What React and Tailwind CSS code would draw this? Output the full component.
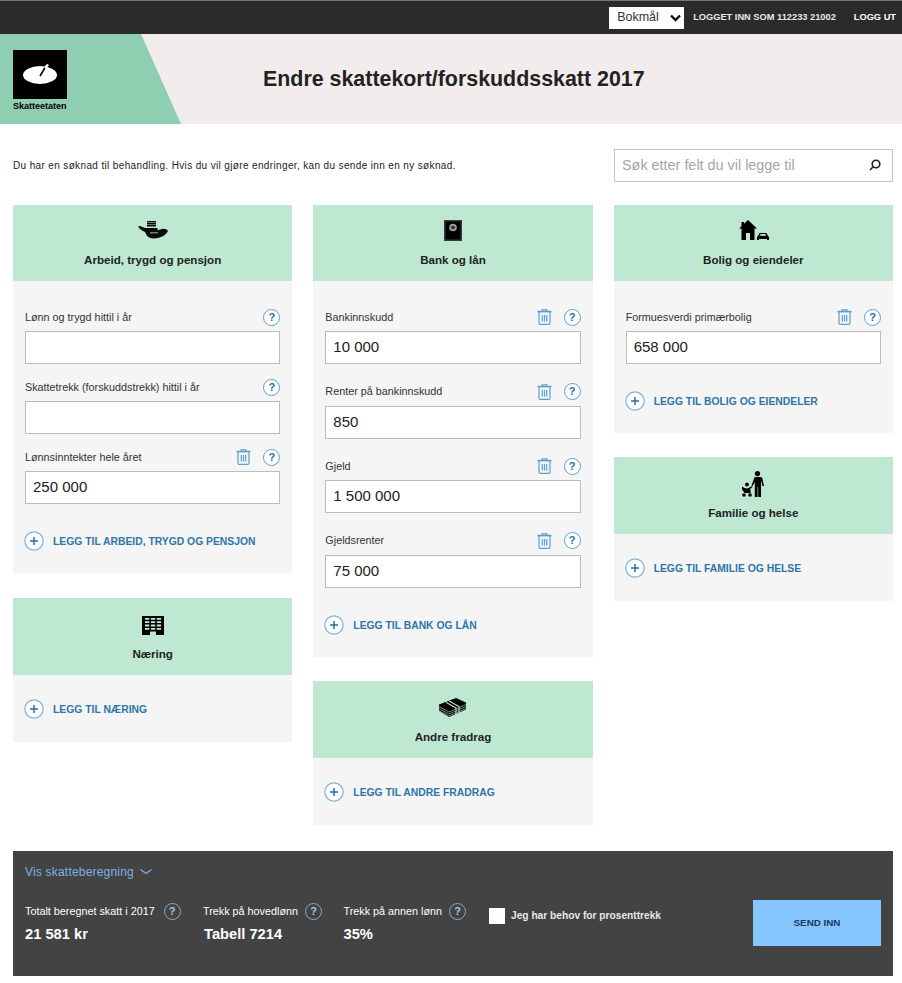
import React from "react";

const Help = ({ dark }) => (
  <span className={`flex h-[17px] w-[17px] shrink-0 items-center justify-center rounded-full border text-[11px] font-bold leading-none ${dark ? "border-[#8aa9c4] text-[#a9c6df]" : "border-[#5b9fcf] bg-white text-[#2a6f9e]"}`}>
    ?
  </span>
);

const Trash = () => (
  <svg width="15" height="16" viewBox="0 0 15 16" fill="none" stroke="#5b9fcf" strokeWidth="1.2">
    <path d="M0.5 2.6h14" strokeWidth="1.6" />
    <path d="M5 2.2V.8h5v1.4" />
    <path d="M2 3v11.2c0 .7.4 1.1 1.1 1.1h8.8c.7 0 1.1-.4 1.1-1.1V3" />
    <path d="M5.3 6v6.5M7.5 6v6.5M9.7 6v6.5" />
  </svg>
);

const PlusCircle = () => (
  <svg width="20" height="20" viewBox="0 0 20 20" fill="none" className="shrink-0">
    <circle cx="10" cy="10" r="9.2" fill="#fff" stroke="#7db5dc" strokeWidth="1.2" />
    <path d="M6 10h8M10 6v8" stroke="#2a6f9e" strokeWidth="1.5" />
  </svg>
);

const HandIcon = () => (
  <svg width="30" height="18" viewBox="0 0 30 18" fill="#0a0a0a">
    <path d="M9 0h9v1.400H9zM9 2h9v1.400H9zM9 4h9v1.400H9z" />
    <path d="M0 5.500L2 5l5 2h11c2 0 2.500 2 1 2.500L24 8c3-.5 5 .5 6 2-2 4-6 6-10 7-4 1-8 .5-11-2l-2-4C4 10 1.500 8 0 5.500z" />
    <path d="M12 11.800h8" stroke="#bfe8d3" strokeWidth="0.8" />
  </svg>
);

const SafeIcon = () => (
  <svg width="18" height="21" viewBox="0 0 18 21">
    <rect x="0" y="0" width="18" height="21" fill="#3a3a3a" />
    <rect x="1.500" y="1.500" width="15" height="18" fill="#000" />
    <circle cx="9" cy="7.500" r="3.800" fill="#9a9a9a" />
    <circle cx="9" cy="7.500" r="1.800" fill="#2a2a2a" />
  </svg>
);

const HouseIcon = () => (
  <svg width="31" height="20" viewBox="0 0 31 20" fill="#000">
    <path d="M10 0l9 8.500h-2.500V20H12v-7H8v7H3.500V8.500H1l2.500-2.300V2H6v1.700z" />
    <path d="M20 16l1.500-3h7l1.500 3c.7.200 1 .6 1 1.200V20h-2v-1h-8v1h-2v-2.800c0-.6.300-1 1-1.200z" />
    <path d="M21.800 15.800l.8-1.700h4.800l.8 1.700z" fill="#bfe8d3" />
  </svg>
);

const FamilyIcon = () => (
  <svg width="22" height="26" viewBox="0 0 22 26" fill="#000">
    <circle cx="15.500" cy="2.600" r="2.600" />
    <path d="M12.500 6h6c1 0 1.700.7 1.900 1.500L22 15h-1.600l-1.400-6v17h-2.800V16h-.6v10h-2.800V11l-2.100 4-1.200-.8 2.800-7.200c.1-.6.400-1 .7-1z" />
    <circle cx="5" cy="13.500" r="1.900" />
    <path d="M0 15.500c2.500 2 5.500 2.500 6.500 1.500l3.500-2 .7.800L8.200 18l.6 4H2.500L0 18.500z" />
    <circle cx="2" cy="24" r="1.800" />
    <circle cx="8" cy="24" r="1.800" />
  </svg>
);

const BuildingIcon = () => (
  <svg width="22" height="19" viewBox="0 0 22 19">
    <path d="M0 0h22v19h-8v-3.500H8V19H0z" fill="#000" />
    <path d="M3 2h4.300v1.800H3zM8.900 2h4.300v1.800H8.900zM14.800 2h4.300v1.800h-4.300zM3 5.300h4.300v1.800H3zM8.900 5.300h4.300v1.800H8.900zM14.800 5.300h4.300v1.800h-4.300zM3 8.600h4.300v1.800H3zM8.900 8.600h4.300v1.800H8.900zM14.800 8.600h4.300v1.800h-4.300zM3 11.900h4.300v1.800H3zM8.900 11.900h4.300v1.800H8.900zM14.800 11.900h4.300v1.800h-4.300z" fill="#bfe8d3" />
  </svg>
);

const MoneyIcon = () => (
  <svg width="27" height="19" viewBox="0 0 27 19" fill="none">
    <path d="M0 6.500L17 0l10 4.500v7L10 19 0 13z" fill="#000" />
    <path d="M0 8.500l10 5.500 17-7.500M0 10.500l10 5.500 17-7.500M0 12.500l10 5.500 17-7.500" stroke="#bfe8d3" strokeWidth="0.6" />
    <path d="M7 4.300l10 5.700v8" stroke="#bfe8d3" strokeWidth="1.100" />
    <path d="M10 3l10 5.500v8" stroke="#bfe8d3" strokeWidth="1.100" />
  </svg>
);

const Field = ({ label, value, trash, gap }) => (
  <div className={gap}>
    <div className="flex h-[18px] items-center justify-between">
      <span className="text-[10.8px] text-[#333]">{label}</span>
      <span className="flex items-center gap-[12px]">
        {trash && <Trash />}
        <Help />
      </span>
    </div>
    <div className="mt-[5px] flex h-[33px] items-center border border-[#bcbcbc] bg-white pl-[7px] text-[15px] text-[#222]">
      {value}
    </div>
  </div>
);

const Card = ({ icon, title, add, fields, fieldGap = "mb-[22px]", iconTop = "pt-[14px]", head = "h-[77px]", titleGap = "mt-[8px]" }) => (
  <section>
    <div className={`flex flex-col items-center bg-[#bfe8d3] ${head} ${iconTop}`}>
      <div className="flex h-[26px] items-center">{icon}</div>
      <h2 className={`text-[11.6px] font-bold leading-4 text-[#222] ${titleGap}`}>{title}</h2>
    </div>
    <div className={`bg-[#f5f5f5] px-3 ${fields ? "pt-[27px] pb-[22px]" : "pt-[24px] pb-[23px]"}`}>
      {fields &&
        fields.map((f, i) => (
          <Field key={f.label} {...f} gap={i === fields.length - 1 ? "mb-[27px]" : fieldGap} />
        ))}
      <a className="-ml-px flex h-5 items-center gap-[9px] text-[10.35px] font-bold text-[#2f75a8]">
        <PlusCircle />
        <span className="pt-[2px]">{add}</span>
      </a>
    </div>
  </section>
);

export default function App() {
  return (
    <div className="h-[983px] w-[902px] bg-white font-['Liberation_Sans',Arial,sans-serif] text-[#222]">
      <div className="flex h-[34px] items-center justify-end gap-[9px] border-t border-t-[#777] bg-[#2b2b2b] pr-[6px] text-[9.27px] font-bold text-white">
        <div className="flex h-[22px] w-[75px] items-center justify-between bg-white pl-[8px] pr-[3px] text-[12.5px] font-normal text-[#333]">
          Bokmål
          <svg width="11" height="8" viewBox="0 0 11 8" fill="none" stroke="#111" strokeWidth="2.400"><path d="M1 1.500l4.500 4.500L10 1.500" /></svg>
        </div>
        <span className="text-[#e8e8e8]">LOGGET INN SOM 112233 21002</span>
        <span className="ml-[9px]">LOGG UT</span>
      </div>

      <header className="relative flex h-[90px] items-center bg-[#f2ecec]">
        <div className="absolute inset-y-0 left-0 w-[181px] bg-[#8fceb0] [clip-path:polygon(0_0,141px_0,100%_100%,0_100%)]" />
        <div className="relative ml-[13px] mt-[2px] flex w-[54px] flex-col">
          <div className="flex h-[49px] items-center justify-center bg-black">
            <svg width="34" height="20" viewBox="0 0 34 20">
              <ellipse cx="17" cy="11" rx="17" ry="9" fill="#fff" />
              <path d="M17 12l6-10" stroke="#000" strokeWidth="1.600" />
              <path d="M21 3l3-3 2 1-3 4z" fill="#fff" />
            </svg>
          </div>
          <span className="mt-[2px] text-[9px] font-bold leading-[10px] text-black">Skatteetaten</span>
        </div>
        <h1 className="relative ml-[196px] text-[21.4px] font-bold text-[#222]">Endre skattekort/forskuddsskatt 2017</h1>
      </header>

      <div className="flex h-[81px] items-center justify-between pl-[13px] pr-[9px]">
        <p className="mt-[1px] text-[10px] tracking-[0.36px] text-[#222]">Du har en søknad til behandling. Hvis du vil gjøre endringer, kan du sende inn en ny søknad.</p>
        <div className="mt-[1px] flex h-[33px] w-[279px] items-center justify-between border border-[#c4c4c4] pl-[7px] pr-[11px] text-[14.4px] text-[#a5a5a5]">
          <span className="pt-[2px]">Søk etter felt du vil legge til</span>
          <svg width="12" height="12" viewBox="0 0 12 12" fill="none" stroke="#222" strokeWidth="1.600">
            <circle cx="7" cy="5" r="3.800" />
            <path d="M4.200 7.800L1 11" />
          </svg>
        </div>
      </div>

      <main className="grid h-[646px] grid-cols-3 items-start gap-x-[21px] pl-[13px] pr-[9px]">
        <div className="flex flex-col gap-[25px]">
          <Card
            icon={<HandIcon />}
            iconTop="pt-[12px]"
            head="h-[76px]"
            titleGap="mt-[9px]"
            title="Arbeid, trygd og pensjon"
            add="LEGG TIL ARBEID, TRYGD OG PENSJON"
            fieldGap="mb-[14px]"
            fields={[
              { label: "Lønn og trygd hittil i år", value: "" },
              { label: "Skattetrekk (forskuddstrekk) hittil i år", value: "" },
              { label: "Lønnsinntekter hele året", value: "250 000", trash: true },
            ]}
          />
          <Card icon={<BuildingIcon />} title="Næring" add="LEGG TIL NÆRING" />
        </div>
        <div className="flex flex-col gap-[24px]">
          <Card
            icon={<SafeIcon />}
            iconTop="pt-[12px]"
            head="h-[76px]"
            titleGap="mt-[9px]"
            title="Bank og lån"
            add="LEGG TIL BANK OG LÅN"
            fieldGap="mb-[18.5px]"
            fields={[
              { label: "Bankinnskudd", value: "10 000", trash: true },
              { label: "Renter på bankinnskudd", value: "850", trash: true },
              { label: "Gjeld", value: "1 500 000", trash: true },
              { label: "Gjeldsrenter", value: "75 000", trash: true },
            ]}
          />
          <Card icon={<MoneyIcon />} title="Andre fradrag" add="LEGG TIL ANDRE FRADRAG" />
        </div>
        <div className="flex flex-col gap-[24px]">
          <Card
            icon={<HouseIcon />}
            iconTop="pt-[12px]"
            head="h-[76px]"
            titleGap="mt-[9px]"
            title="Bolig og eiendeler"
            add="LEGG TIL BOLIG OG EIENDELER"
            fields={[{ label: "Formuesverdi primærbolig", value: "658 000", trash: true }]}
          />
          <Card icon={<FamilyIcon />} title="Familie og helse" add="LEGG TIL FAMILIE OG HELSE" />
        </div>
      </main>

      <footer className="ml-[13px] mr-[9px] h-[125px] bg-[#434343] px-3 pt-[12px] text-white">
        <div className="flex items-center gap-[6px] text-[12px] tracking-[0.2px] text-[#7fb2e0]">
          Vis skatteberegning
          <svg width="12" height="6" viewBox="0 0 12 6" fill="none" stroke="#7fb2e0" strokeWidth="1.100"><path d="M.5.5L6 4.500 11.500.5" /></svg>
        </div>
        <div className="mt-[22px] flex items-start">
          <div className="w-[178px]">
            <div className="flex h-[17px] items-center gap-[9px] text-[10.8px]">Totalt beregnet skatt i 2017 <Help dark /></div>
            <div className="mt-[3px] text-[14.7px] font-bold">21 581 kr</div>
          </div>
          <div className="w-[140.5px]">
            <div className="flex h-[17px] items-center gap-[7px] text-[10.8px]">Trekk på hovedlønn <Help dark /></div>
            <div className="mt-[3px] pl-px text-[14.7px] font-bold">Tabell 7214</div>
          </div>
          <div className="w-[145.5px]">
            <div className="flex h-[17px] items-center gap-[7px] text-[10.8px]">Trekk på annen lønn <Help dark /></div>
            <div className="mt-[3px] text-[14.7px] font-bold">35%</div>
          </div>
          <div className="mt-[4px] flex h-[17px] items-center gap-[6px] text-[10.2px] font-bold text-[#e8e8e8]">
            <span className="block h-[16px] w-[16px] bg-white" />
            Jeg har behov for prosenttrekk
          </div>
          <div className="ml-auto mt-[-3px] flex h-[46px] w-[128px] items-center justify-center bg-[#85c6ff] text-[9.8px] font-bold text-[#1b3a57]">
            SEND INN
          </div>
        </div>
      </footer>
    </div>
  );
}
